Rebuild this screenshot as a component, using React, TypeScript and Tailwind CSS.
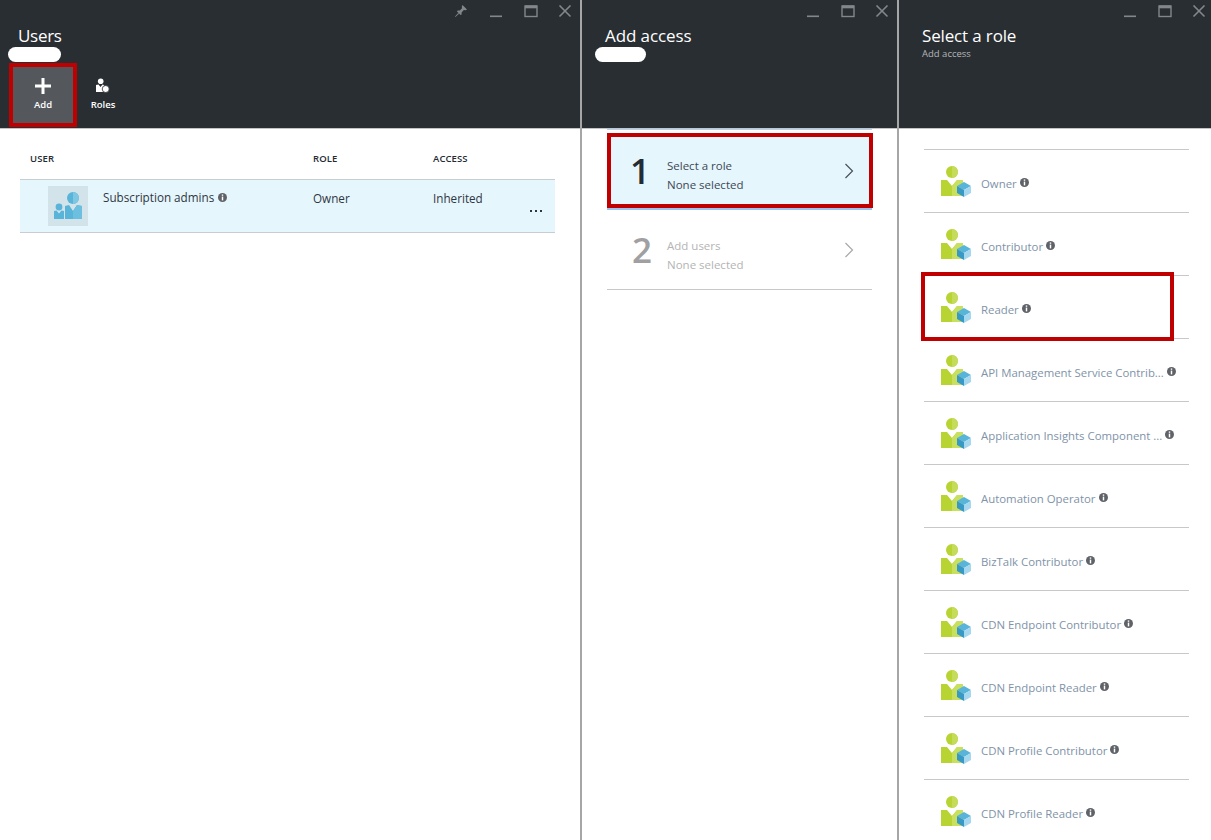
const font = { fontFamily: '"Open Sans", "Noto Sans", sans-serif' };

const roles = [
   "Owner",
   "Contributor",
   "Reader",
   "API Management Service Contrib...",
   "Application Insights Component ...",
   "Automation Operator",
   "BizTalk Contributor",
   "CDN Endpoint Contributor",
   "CDN Endpoint Reader",
   "CDN Profile Contributor",
   "CDN Profile Reader",
];

function InfoDot({className = ""}: {className?: string}) {
   return (
      <svg viewBox="0 0 10 10" className={`w-[9px] h-[9px] shrink-0 ${className}`}>
         <circle cx="5" cy="5" r="5" fill="#5f6368"/>
         <rect x="4.2" y="1.6" width="1.6" height="1.5" fill="#fff"/>
         <rect x="4.2" y="4" width="1.6" height="4.2" fill="#fff"/>
      </svg>
   );
}

function WindowControls({pin = false, className = "right-[8px]"}: {pin?: boolean; className?: string}) {
   return (
      <div className={`absolute top-[5px] flex items-center text-[#83878c] ${className}`}>
         {pin && (
            <svg viewBox="0 0 14 14" className="w-[14px] h-[14px] mr-[21px]">
               <path d="M8.5 0 L13 4.5 L11.6 5.2 L9.8 5 L7.6 7.4 L7.6 9.6 L6.6 10 L3 6.4 L3.6 5.4 L5.8 5.4 L8 3.2 L7.8 1.4 Z M4.2 8 L5 8.8 L1.4 12 L1 11.6 Z" fill="currentColor"/>
            </svg>
         )}
         <svg viewBox="0 0 14 14" className="w-[14px] h-[14px] mr-[21px]"><rect x="1" y="10.5" width="12" height="1.6" fill="currentColor"/></svg>
         <svg viewBox="0 0 14 14" className="w-[14px] h-[14px] mr-[20px]">
            <rect x="1" y="1" width="12" height="10.5" fill="none" stroke="currentColor" strokeWidth="1.4"/>
            <rect x="1" y="0.5" width="12" height="2.8" fill="currentColor"/>
         </svg>
         <svg viewBox="0 0 14 14" className="w-[14px] h-[14px]"><path d="M1.5 0.5 L12.5 11.5 M12.5 0.5 L1.5 11.5" stroke="currentColor" strokeWidth="1.6"/></svg>
      </div>
   );
}

function Blob({className = ""}: {className?: string}) {
   return <div className={`h-[15px] bg-white rounded-full ${className}`}/>;
}

function UsersIcon() {
   return (
      <div className="w-[40px] h-[40px] bg-[#d3e3ea] shrink-0 mt-[6px] ml-[28px]">
         <svg viewBox="0 0 40 40" className="w-full h-full">
            <circle cx="25" cy="12" r="6" fill="#59b4d9"/>
            <path d="M25 6 a6 6 0 0 1 0 12 Z" fill="#7fc6e3"/>
            <path d="M17 20 L21 19 L25 25 L29 19 L34 20 L34 33 L17 33 Z" fill="#59b4d9"/>
            <path d="M25 25 L29 19 L34 20 L34 33 L25 33 Z" fill="#6dbfe0"/>
            <circle cx="11" cy="21" r="3.4" fill="#59b4d9"/>
            <path d="M6 25 L8.5 24.5 L11 27.5 L13.5 24.5 L16 25 L16 33 L6 33 Z" fill="#59b4d9"/>
         </svg>
      </div>
   );
}

function RoleIcon() {
   return (
      <svg viewBox="0 0 30 31" className="w-[30px] h-[31px] shrink-0">
         <circle cx="11" cy="6" r="6" fill="#b8d432"/>
         <path d="M11 0 a6 6 0 0 1 0 12 Z" fill="#c5dc5a"/>
         <path d="M0 14 L6 14 L11 20 L16 14 L22 14 L22 30 L0 30 Z" fill="#b8d432"/>
         <path d="M11 20 L16 14 L22 14 L22 30 L11 30 Z" fill="#c9e05f"/>
         <path d="M16 20 L23 16 L30 20 L23 24 Z" fill="#59b4d9"/>
         <path d="M16 20 L23 24 L23 31 L16 27 Z" fill="#3999c6"/>
         <path d="M23 24 L30 20 L30 27 L23 31 Z" fill="#a5d8ef"/>
      </svg>
   );
}

function Chevron({color}: {color: string}) {
   return (
      <svg viewBox="0 0 10 16" className="w-[10px] h-[16px] shrink-0">
         <path d="M1.5 1 L8.5 8 L1.5 15" fill="none" stroke={color} strokeWidth="1.2"/>
      </svg>
   );
}

export default function App() {
   return (
      <div className="flex w-[1211px] h-[840px] overflow-hidden bg-white" style={font}>
         {/* Users blade */}
         <section className="w-[582px] h-full shrink-0 border-r-2 border-[#a6a6a6]">
            <header className="relative h-[129px] bg-[#292e33] border-b border-[#c4c4c4] pl-[18px]">
               <WindowControls pin/>
               <h1 className="pt-[24px] text-[17px] tracking-[-0.3px] leading-[24px] text-white">Users</h1>
               <Blob className="w-[53px] ml-[-10px] mt-[-1px]"/>
               <div className="flex items-start ml-[-9px] mt-[1px]">
                  <button className="w-[68px] h-[64px] bg-[#54585d] border-[4px] border-[#c00000] flex flex-col items-center pt-[11px] text-white">
                     <svg viewBox="0 0 16 16" className="w-[16px] h-[16px]"><path d="M6.5 0 H9.5 V6.5 H16 V9.5 H9.5 V16 H6.5 V9.5 H0 V6.5 H6.5 Z" fill="#fff"/></svg>
                     <span className="text-[9.5px] leading-[12px] mt-[5px] font-semibold">Add</span>
                  </button>
                  <div className="w-[52px] flex flex-col items-center pt-[15px] text-white">
                     <svg viewBox="0 0 14 15" className="w-[14px] h-[15px]">
                        <circle cx="4.7" cy="3.3" r="2.8" fill="#fff"/>
                        <path d="M0 7 L2.5 6.5 L4.5 9 L6.5 6.5 L8 7 L8 14 L0 14 Z" fill="#fff"/>
                        <circle cx="9.7" cy="11" r="3.5" fill="#fff" stroke="#292e33" strokeWidth="0.8"/>
                     </svg>
                     <span className="text-[9.5px] leading-[12px] mt-[6px] font-semibold">Roles</span>
                  </div>
               </div>
            </header>
            <div className="px-[20px] pr-[25px]">
               <div className="flex h-[50px] pt-[10px] items-center text-[9.5px] font-semibold tracking-[0.1px] text-[#252b33]">
                  <span className="w-[293px] pl-[10px]">USER</span>
                  <span className="w-[120px]">ROLE</span>
                  <span>ACCESS</span>
               </div>
               <div className="relative flex h-[54px] bg-[#e5f6fd] border-y border-[#c8cdd0] text-[11.7px] text-[#303641]">
                  <UsersIcon/>
                  <div className="w-[210px] ml-[15px] pt-[7px] flex items-center self-start gap-[4px]">
                     <span className="leading-[20px]">Subscription admins</span>
                     <InfoDot/>
                  </div>
                  <span className="w-[120px] pt-[8px] leading-[20px]">Owner</span>
                  <span className="pt-[8px] leading-[20px]">Inherited</span>
                  <div className="absolute right-[13px] top-[30px] flex gap-[3px]">
                     <i className="w-[2px] h-[2px] bg-[#303641]"/>
                     <i className="w-[2px] h-[2px] bg-[#303641]"/>
                     <i className="w-[2px] h-[2px] bg-[#303641]"/>
                  </div>
               </div>
            </div>
         </section>

         {/* Add access blade */}
         <section className="w-[317px] h-full shrink-0 border-r-2 border-[#a6a6a6]">
            <header className="relative h-[129px] bg-[#292e33] border-b border-[#c4c4c4] pl-[23px]">
               <WindowControls/>
               <h1 className="pt-[24px] text-[17px] tracking-[-0.1px] leading-[24px] text-white">Add access</h1>
               <Blob className="w-[51px] ml-[-10px] mt-[-1px]"/>
            </header>
            <div className="px-[25px]">
               <div className="h-[81px] border-t border-b-2 border-t-[#b5d3f3] border-b-[#9cc3ee]">
                  <div className="h-[75px] mt-[3px] mr-[-1px] bg-[#e5f6fd] border-[4px] border-[#c00000] flex items-center pl-[19px] pr-[15px]">
                     <span className="w-[37px] text-[35px] leading-[40px] font-semibold text-[#252b33]">1</span>
                     <div className="flex-1 pt-[9px] text-[11.5px] leading-[19px] text-[#404754]">
                        <p>Select a role</p>
                        <p>None selected</p>
                     </div>
                     <Chevron color="#4a5058"/>
                  </div>
               </div>
               <div className="h-[80px] border-b border-[#c8c8c8] flex items-center pl-[25px] pr-[18px]">
                  <span className="w-[35px] text-[35px] leading-[40px] font-semibold text-[#a0a0a2]">2</span>
                  <div className="flex-1 pt-[10px] text-[11.5px] leading-[19px] text-[#b4b4b4]">
                     <p>Add users</p>
                     <p>None selected</p>
                  </div>
                  <Chevron color="#a8a8a8"/>
               </div>
            </div>
         </section>

         {/* Select a role blade */}
         <section className="flex-1 h-full">
            <header className="relative h-[129px] bg-[#292e33] border-b border-[#c4c4c4] pl-[23px]">
               <WindowControls className="right-[5px]"/>
               <h1 className="pt-[24px] text-[17px] tracking-[-0.15px] leading-[24px] text-white">Select a role</h1>
               <p className="text-[9.5px] leading-[12px] text-[#b4b6b8]">Add access</p>
            </header>
            <div className="relative mx-[25px] mr-[22px] mt-[20px] border-t border-[#c8c8c8]">
               {roles.map(role => (
                  <div key={role} className="h-[63px] flex items-center pl-[17px] border-b border-[#c8c8c8]">
                     <RoleIcon/>
                     <span className="ml-[10px] mt-[6px] text-[11.4px] text-[#8093a8] whitespace-nowrap">{role}</span>
                     <InfoDot className="ml-[3px] mt-[3px]"/>
                  </div>
               ))}
               <div className="absolute left-[-3px] top-[122px] w-[253px] h-[69px] border-[4px] border-[#c00000]"/>
            </div>
         </section>
      </div>
   );
}
